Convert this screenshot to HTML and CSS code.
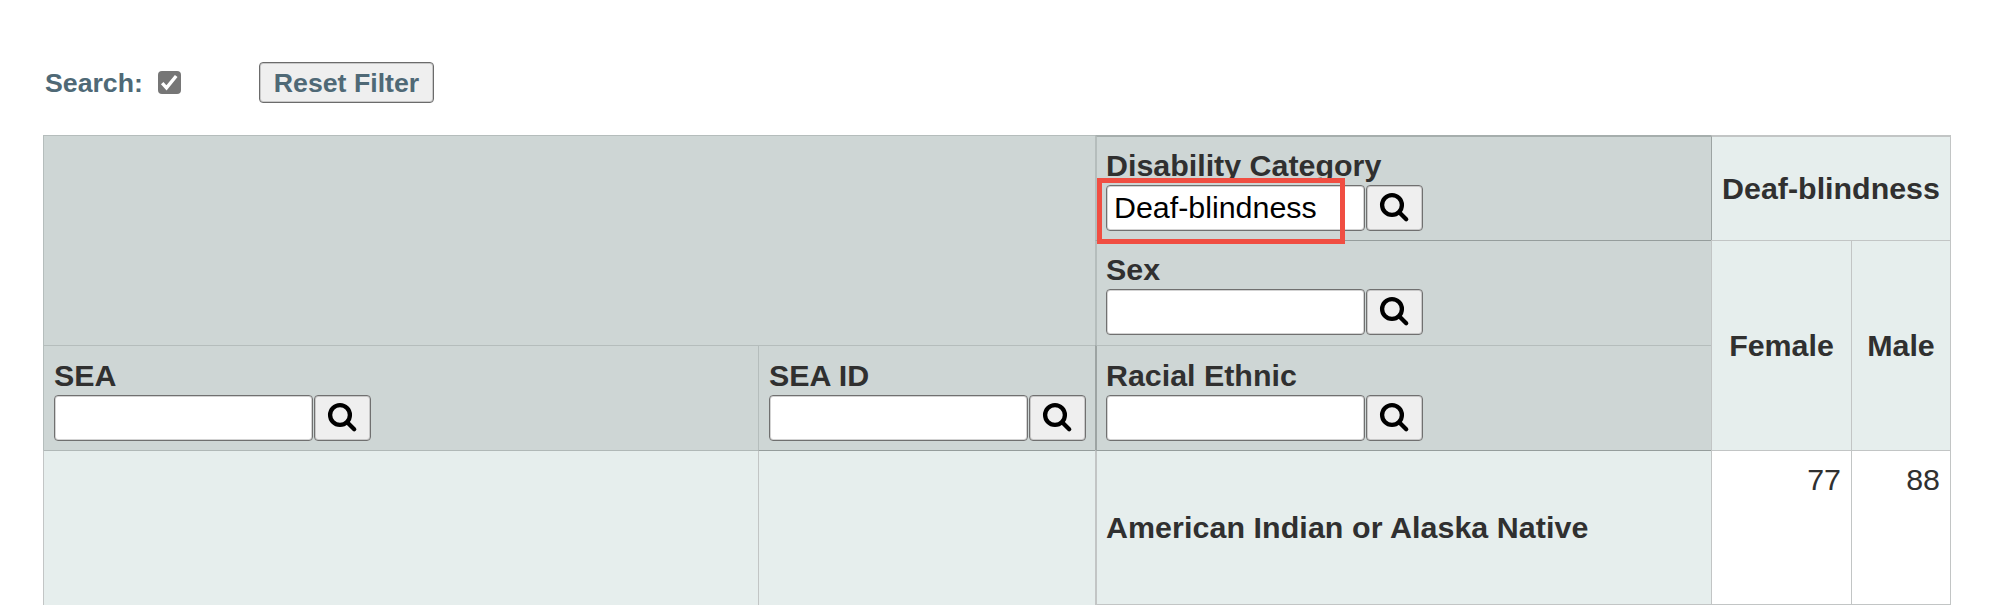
FILE: index.html
```html
<!DOCTYPE html>
<html lang="en">
<head>
<meta charset="utf-8">
<title>Report filter</title>
<link rel="stylesheet" href="styles.css">
</head>
<body>
<svg width="0" height="0" class="defs"><symbol id="mag" viewBox="0 0 32 32"><circle cx="13" cy="13" r="9.9"/><path d="M20.2 20.2L27.2 27.2"/></symbol></svg>
<div class="toolbar">
  <span class="search-label">Search:</span>
  <span class="check"><svg viewBox="0 0 23 23"><path d="M4.2 12.2L8.5 16.8L18.2 5"/></svg></span>
  <button class="reset">Reset Filter</button>
</div>
<div class="grid">
  <div class="cell dark blank"></div>
  <div class="cell dark filter disability"><label>Disability Category</label>
    <div class="field"><input value="Deaf-blindness"><button class="go"><svg><use href="#mag"/></svg></button><span class="highlight"></span></div></div>
  <div class="cell head group">Deaf-blindness</div>
  <div class="cell dark filter sex"><label>Sex</label>
    <div class="field"><input><button class="go"><svg><use href="#mag"/></svg></button></div></div>
  <div class="cell head female">Female</div>
  <div class="cell head male">Male</div>
  <div class="cell dark filter sea"><label>SEA</label>
    <div class="field"><input><button class="go"><svg><use href="#mag"/></svg></button></div></div>
  <div class="cell dark filter sea-id"><label>SEA ID</label>
    <div class="field"><input><button class="go"><svg><use href="#mag"/></svg></button></div></div>
  <div class="cell dark filter race"><label>Racial Ethnic</label>
    <div class="field"><input><button class="go"><svg><use href="#mag"/></svg></button></div></div>
  <div class="cell light body-sea"></div>
  <div class="cell light body-id"></div>
  <div class="cell light row-head">American Indian or Alaska Native</div>
  <div class="cell value">77</div>
  <div class="cell value last">88</div>
</div>
</body>
</html>
```
FILE: styles.css
```css
* { box-sizing: border-box; }
body {
  margin: 0;
  height: 605px;
  overflow: hidden;
  background: #fff;
  color: #303030;
  font-family: "Liberation Sans", Arial, sans-serif;
  font-size: 30.4px;
  line-height: 35px;
}
.defs { display: block; }
.toolbar {
  display: flex;
  align-items: center;
  height: 135px;
  padding: 62px 0 32px 45px;
  color: #4f6976;
  font-size: 26.7px;
  font-weight: bold;
}
.search-label { width: 113px; padding-top: 1px; }
.check {
  width: 23px;
  height: 23px;
  margin-right: 78px;
  border-radius: 4px;
  background: #767676;
}
.check svg { display: block; fill: none; stroke: #fff; stroke-width: 3.4; }
.reset {
  width: 175px;
  height: 41px;
  padding: 1px 0 0;
  border: 1px solid #6b6b6b;
  border-radius: 4px;
  box-shadow: inset 0 0 0 1px rgba(110, 110, 110, .3);
  background: #efefef;
  color: inherit;
  font: inherit;
}
.grid {
  display: grid;
  grid-template-columns: 715px 337px 616px 140px 100px;
  grid-template-rows: 105px 105px 105px 155px;
  width: 1908px;
  margin-left: 43px;
}
.cell { border: 0 solid #c2c5c5; border-width: 1px 0 0 1px; }
.dark { background: #ced6d5; border-color: #b5bdbc; }
.light, .head { background: #e6eeed; }
.head {
  display: flex;
  align-items: center;
  justify-content: center;
  font-weight: bold;
}
.blank { grid-area: 1 / 1 / 3 / 3; }
.disability { grid-area: 1 / 3; border-top: 2px solid #a6aead; }
.group { grid-area: 1 / 4 / 2 / 6; border-top-width: 2px; border-left: 1px solid #9da4a3; border-right-width: 1px; }
.sex { grid-area: 2 / 3; border-top-color: #959d9c; }
.female { grid-area: 2 / 4 / 4 / 5; }
.male { grid-area: 2 / 5 / 4 / 6; border-right-width: 1px; }
.sea { grid-area: 3 / 1; }
.sea-id { grid-area: 3 / 2; }
.race { grid-area: 3 / 3; border-left-color: #9da4a3; }
.disability, .sex, .race, .row-head { border-left-width: 2px; }
.filter {
  display: flex;
  flex-direction: column;
  justify-content: flex-end;
  padding: 0 0 9px 10px;
}
.disability, .sex, .race { padding-left: 9px; }
.sex { padding-bottom: 10px; }
.filter label { height: 37px; font-weight: bold; }
.field { position: relative; display: flex; gap: 1px; }
.field input, .go {
  margin: 0;
  height: 46px;
  border: 1px solid #707070;
  border-radius: 4px;
  box-shadow: inset 0 0 0 1px rgba(110, 110, 110, .3);
}
.field input {
  width: 259px;
  padding: 0 7px 2px;
  background: #fff;
  color: #000;
  font: inherit;
}
.go { width: 57px; padding: 0; background: #efefef; }
.go svg {
  display: block;
  width: 32px;
  height: 32px;
  margin: 0 0 0 12px;
  fill: none;
  stroke: #000;
  stroke-width: 4.3;
  stroke-linecap: round;
}
.highlight {
  position: absolute;
  left: -9px;
  top: -7px;
  width: 248px;
  height: 66px;
  border: 5px solid #f04e42;
}
.body-id { border-top-color: #959d9c; }
.body-sea { border-top-color: #b0b8b7; }
.row-head {
  display: flex;
  align-items: center;
  padding-left: 9px;
  border-top-color: #959d9c;
  border-bottom: 1px solid #c2c5c5;
  font-weight: bold;
  letter-spacing: 0.07px;
}
.value { padding: 11px 10px 0 0; text-align: right; border-bottom: 1px solid #c2c5c5; }
.last { border-right-width: 1px; }
```
